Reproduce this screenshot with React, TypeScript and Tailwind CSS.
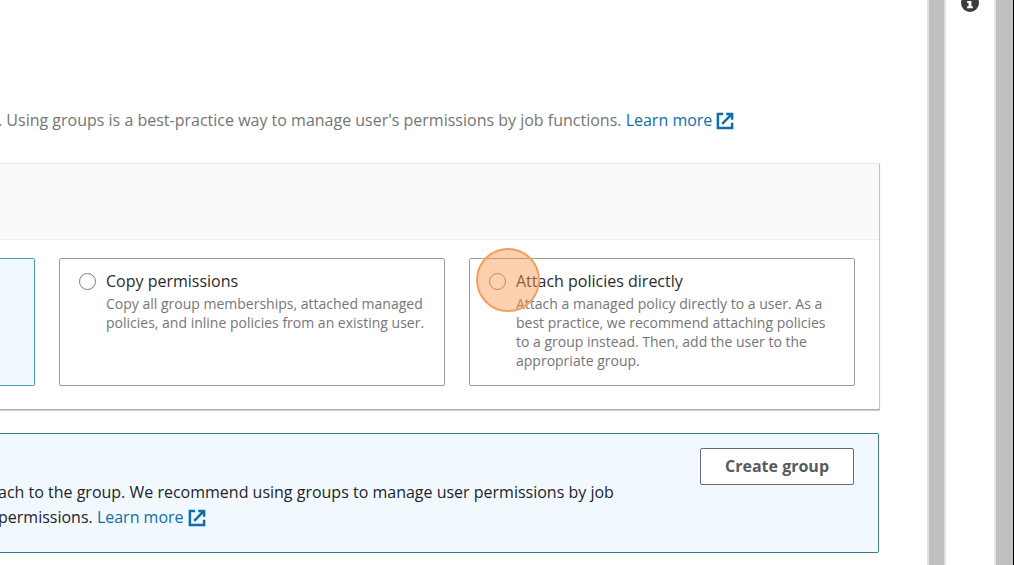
import type { ReactNode } from "react";

function ExternalIcon() {
  return (
    <svg
      viewBox="0 0 18 18"
      className="ml-1 inline-block h-[18px] w-[18px] align-[-4px]"
      fill="none"
      stroke="currentColor"
      strokeWidth="2.5"
      aria-hidden="true"
    >
      <path d="M7.2 1.9H1.9v14.2h14.2v-5.3" />
      <path d="M10.2 1.9h5.9v5.9M15.8 2.2L6.2 11.8" />
    </svg>
  );
}

function LearnMore() {
  return (
    <a href="#learn-more" className="text-[#0e6fa8]">
      Learn more
      <ExternalIcon />
    </a>
  );
}

type OptionProps = {
  id: string;
  title: string;
  children: ReactNode;
  highlighted?: boolean;
};

function OptionTile({ id, title, children, highlighted }: OptionProps) {
  return (
    <div className="relative flex min-w-0 flex-1 gap-[10px] rounded-xs border border-[#9b9b9b] bg-white pt-3 pr-4 pl-[19px]">
      <input
        type="radio"
        name="permission-option"
        id={id}
        aria-describedby={id + "-description"}
        className="mt-[2px] h-[17px] w-[17px] shrink-0 appearance-none rounded-full border border-[#7d7d7d] bg-white"
      />
      <div className="min-w-0">
        <label htmlFor={id} className="block text-[16px] leading-5 text-[#2b2b2b]">
          {title}
        </label>
        <p id={id + "-description"} className="mt-[3px] text-[14px] leading-[19px] text-[#777577]">
          {children}
        </p>
      </div>
      {highlighted && (
        <span className="pointer-events-none absolute -top-[11px] left-[6px] h-16 w-16 rounded-full border-2 border-[#f2a05f] bg-[#fb9a50]/45" />
      )}
    </div>
  );
}

export default function App() {
  return (
    <div className="flex h-screen overflow-hidden bg-white font-['Open_Sans',sans-serif] text-[16px]">
      <main className="min-w-0 flex-1 overflow-hidden pt-[108px] pr-[47px]">
        <p className="-ml-0.5 leading-6 whitespace-nowrap text-[#757575]">
          . Using groups is a best-practice way to manage user's permissions by job functions.{" "}
          <LearnMore />
        </p>

        <section className="mt-[31px] border-t border-r border-b border-t-[#ebebeb] border-r-[#c4c4c4] border-b-[#aaaaaa] shadow-[0_1px_1px_#d5d5d5]">
          <header className="h-[76px] border-b border-[#eeeeee] bg-[#fafafa]" />
          <div className="flex min-h-[169px] gap-6 pt-[18px] pr-6 pb-[23px]">
            <div className="w-[35px] shrink-0 rounded-r-xs border border-l-0 border-[#489eaa] bg-[#f1f9ff]" />
            <OptionTile id="copy" title="Copy permissions">
              Copy all group memberships, attached managed policies, and inline policies from an
              existing user.
            </OptionTile>
            <OptionTile id="attach" title="Attach policies directly" highlighted>
              Attach a managed policy directly to a user. As a best practice, we recommend
              attaching policies to a group instead. Then, add the user to the appropriate group.
            </OptionTile>
          </div>
        </section>

        <section className="mt-[23px] mr-px rounded-r-xs border border-l-0 border-[#397c8c] bg-[#f1f9ff] pt-[14px] pr-6 pb-[22px]">
          <div className="flex justify-end">
            <button
              type="button"
              className="h-[37px] rounded-xs border border-[#686b6f] bg-white px-6 pb-0.5 font-bold text-[#545b5f]"
            >
              Create group
            </button>
          </div>
          <p className="-mt-[5px] -ml-0.5 leading-[25px] whitespace-nowrap text-[#1d2428]">
            ach to the group. We recommend using groups to manage user permissions by job
            <br />
            permissions. <LearnMore />
          </p>
        </section>
      </main>

      <div className="w-[19px] shrink-0 border-x-2 border-[#e2e2e2] bg-[#c1c0c1]" />
      <aside className="flex w-12 shrink-0 justify-center">
        <button type="button" aria-label="Information" className="-mt-[6px] h-[18px] w-[18px]">
          <svg viewBox="0 0 19 19" className="h-[18px] w-[18px]" aria-hidden="true">
            <circle cx="9.5" cy="9.5" r="9.5" fill="#3c3c3c" />
            <path fill="#fff" d="M8 3h3v3H8zM6.5 7.5H11v5.5h1.5v2h-6v-2H8V9.5H6.5z" />
          </svg>
        </button>
      </aside>
      <div className="w-5 shrink-0 border-r border-l-2 border-r-black border-l-[#e6e6e6] bg-[#c0c0c0]" />
    </div>
  );
}
